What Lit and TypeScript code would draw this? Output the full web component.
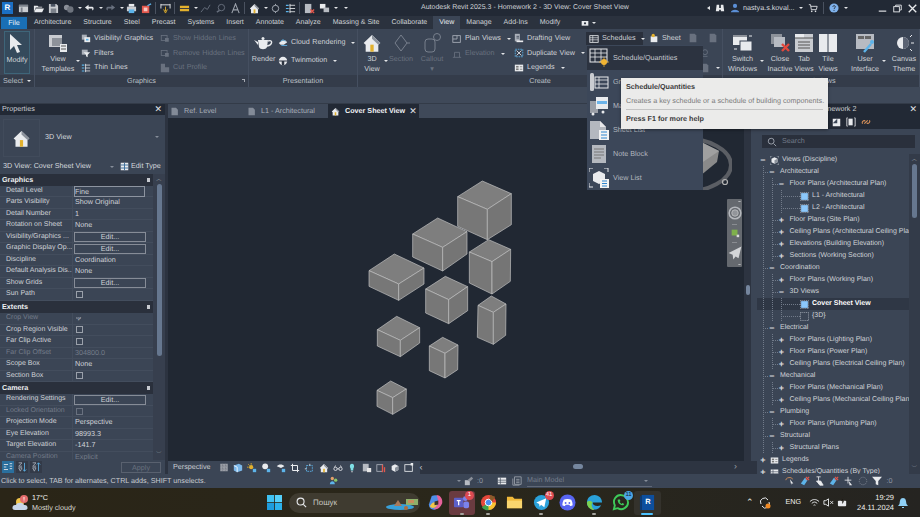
import { LitElement, css, html, svg } from 'lit'
import { customElement } from 'lit/decorators.js'
import { classMap } from 'lit/directives/class-map.js'

// small helper so every icon is a plain inline svg with its own box
const ico = (w: number, h: number, body: unknown, vb = '0 0 12 12') =>
  html`<svg class="ico" width=${w} height=${h} viewBox=${vb}>${body}</svg>`

const W = '#e9ebee'
const G = '#aab0ba'
const D = '#69717f'
const B = '#5db4ea'

const house = svg`<path d="M1 6 6 1.2 11 6 9.8 7V11.2H2.2V7Z" fill="${W}"/><path d="M6 1.2 11 6 9.8 7 6 3.4Z" fill="#8b929c"/><rect x="5" y="7" width="2" height="4.2" fill="#e3b12d"/>`
const cubeIco = svg`<path d="M2 3.6 6 1.6 10 3.6V8.4L6 10.4 2 8.4Z" fill="${W}"/><path d="M6 5.6 10 3.6V8.4L6 10.4Z" fill="#8b929c"/>`
const sheetIco = svg`<path d="M2 1H8L10.500 3.500V11H2Z" fill="#9a9ea6"/><path d="M8 1 10.500 3.500H8Z" fill="#dfe1e4"/>`
const dimIco = svg`<rect x="1.500" y="3" width="7" height="6" fill="none" stroke="${D}"/><rect x="6" y="6" width="4.500" height="4.500" fill="${D}"/>`
const listIco = svg`<rect x="1" y="2" width="10" height="8" fill="${W}"/><path d="M1 5H11M1 7.500H11M4 2V10" stroke="#3b4555" stroke-width=".8"/>`

const icons: Record<string, unknown> = {
  vg: svg`<rect x="1" y="2" width="6" height="6" fill="${G}"/><rect x="4" y="5" width="7" height="6" fill="${W}"/><rect x="6" y="7" width="3" height="2" fill="${B}"/>`,
  filter: svg`<rect x="1" y="2" width="7" height="6" fill="${G}"/><path d="M3 5H11L8 8V11L6 10V8Z" fill="${W}"/>`,
  thin: svg`<path d="M1 2.500H4M1 6H4M1 9.500H4" stroke="${B}" stroke-width="1.300"/><path d="M5 2.500H11M5 6H11M5 9.500H11M5.500 1V11" stroke="${W}" stroke-width=".9"/>`,
  dim: dimIco,
  cut: svg`<path d="M1 1H6V5H11V11H1Z" fill="${D}"/>`,
  cloud: svg`<path d="M1 6 5 3 9 3 11 5 7 8H3Z" fill="${W}"/><path d="M3 4 6 2 9 4" stroke="${B}" fill="none"/><path d="M4 9H11" stroke="${B}"/>`,
  twin: svg`<circle cx="6" cy="6" r="5" fill="${W}"/><path d="M1 5.500H11V6.500H7.500V11H4.500V6.500H1Z" fill="#2c3340"/>`,
  plan: svg`<rect x="1" y="2" width="9" height="8" fill="none" stroke="${G}"/><path d="M1 6H6V2" stroke="${G}" fill="none"/>`,
  elev: svg`<path d="M1 10H11M3 10V4H9V10" stroke="${D}" fill="none"/>`,
  draft: svg`<rect x="1" y="1" width="6" height="9" fill="${G}"/><path d="M3 9H11V11H3Z" fill="${W}"/><path d="M3 4H6M3 6H6" stroke="#3b4555"/>`,
  dup: svg`<rect x="1.500" y="1.500" width="9" height="9" fill="none" stroke="${B}" stroke-dasharray="2 1"/><path d="M3 3 9 9M9 3 3 9" stroke="${W}"/>`,
  legend: svg`<rect x="1" y="2" width="10" height="8" fill="${W}"/><rect x="2.500" y="3.500" width="3" height="2" fill="#777"/><rect x="2.500" y="6.500" width="3" height="2" fill="#777"/><path d="M7 4.500H10M7 7.500H10" stroke="#777"/>`,
  sched: svg`<rect x="1" y="2" width="10" height="8" fill="none" stroke="${W}"/><path d="M1 4.500H11M1 7H11M4.500 2V10" stroke="${W}" stroke-width=".8"/>`,
  sheet: svg`<path d="M2 4H10V11H2Z" fill="${W}"/><circle cx="5" cy="3" r="2" fill="#e3b12d"/>`,
  sheetd: sheetIco,
  dark: svg`<path d="M2 1H8L10 3V11H2Z" fill="${D}"/>`,
}

const CUBES: number[][] = [
  [397, 36, 484, 74, 412, 121, 323, 83, 412, 212, 323, 172, 484, 167],
  [263, 147, 351, 188, 278, 235, 188, 195, 278, 306, 188, 264, 351, 255],
  [416, 212, 482, 241, 426, 278, 358, 249, 426, 375, 358, 342, 481, 337],
  [133, 255, 222, 297, 146, 345, 57, 305, 146, 394, 57, 352, 222, 345],
  [286, 322, 353, 353, 296, 392, 227, 360, 296, 464, 227, 432, 353, 425],
  [424, 381, 468, 405, 430, 430, 384, 409, 430, 526, 382, 505, 467, 499],
  [140, 442, 209, 476, 151, 514, 82, 482, 151, 563, 82, 531, 209, 522],
  [278, 505, 324, 528, 285, 553, 238, 531, 285, 627, 238, 605, 323, 602],
  [122, 636, 169, 660, 128, 686, 81, 664, 128, 736, 81, 712, 168, 712],
]

type Prop = { n: string; v?: string; edit?: boolean; check?: boolean; on?: boolean; off?: boolean; box?: boolean }

const PROPS: { title: string; rows: Prop[] }[] = [
  {
    title: 'Graphics',
    rows: [
      { n: 'Detail Level', v: 'Fine', box: true },
      { n: 'Parts Visibility', v: 'Show Original' },
      { n: 'Detail Number', v: '1' },
      { n: 'Rotation on Sheet', v: 'None' },
      { n: 'Visibility/Graphics ...', edit: true },
      { n: 'Graphic Display Op...', edit: true },
      { n: 'Discipline', v: 'Coordination' },
      { n: 'Default Analysis Dis...', v: 'None' },
      { n: 'Show Grids', edit: true },
      { n: 'Sun Path', check: true },
    ],
  },
  {
    title: 'Extents',
    rows: [
      { n: 'Crop View', check: true, on: true, off: true },
      { n: 'Crop Region Visible', check: true },
      { n: 'Far Clip Active', check: true },
      { n: 'Far Clip Offset', v: '304800.0', off: true },
      { n: 'Scope Box', v: 'None' },
      { n: 'Section Box', check: true },
    ],
  },
  {
    title: 'Camera',
    rows: [
      { n: 'Rendering Settings', edit: true },
      { n: 'Locked Orientation', check: true, off: true },
      { n: 'Projection Mode', v: 'Perspective' },
      { n: 'Eye Elevation', v: '98993.3' },
      { n: 'Target Elevation', v: '-141.7' },
      { n: 'Camera Position', v: 'Explicit', off: true },
    ],
  },
]

type Node = { l: number; t: string; x?: string; i?: string; cur?: boolean }

const TREE: Node[] = [
  { l: 0, x: '−', t: 'Views (Discipline)', i: 'views' },
  { l: 1, x: '−', t: 'Architectural' },
  { l: 2, x: '−', t: 'Floor Plans (Architectural Plan)' },
  { l: 3, t: 'L1 - Architectural', i: 'open' },
  { l: 3, t: 'L2 - Architectural', i: 'open' },
  { l: 2, x: '+', t: 'Floor Plans (Site Plan)' },
  { l: 2, x: '+', t: 'Ceiling Plans (Architectural Ceiling Plan)' },
  { l: 2, x: '+', t: 'Elevations (Building Elevation)' },
  { l: 2, x: '+', t: 'Sections (Working Section)' },
  { l: 1, x: '−', t: 'Coordination' },
  { l: 2, x: '+', t: 'Floor Plans (Working Plan)' },
  { l: 2, x: '−', t: '3D Views' },
  { l: 3, t: 'Cover Sheet View', i: 'open', cur: true },
  { l: 3, t: '{3D}', i: 'closed' },
  { l: 1, x: '−', t: 'Electrical' },
  { l: 2, x: '+', t: 'Floor Plans (Lighting Plan)' },
  { l: 2, x: '+', t: 'Floor Plans (Power Plan)' },
  { l: 2, x: '+', t: 'Ceiling Plans (Electrical Ceiling Plan)' },
  { l: 1, x: '−', t: 'Mechanical' },
  { l: 2, x: '+', t: 'Floor Plans (Mechanical Plan)' },
  { l: 2, x: '+', t: 'Ceiling Plans (Mechanical Ceiling Plan)' },
  { l: 1, x: '−', t: 'Plumbing' },
  { l: 2, x: '+', t: 'Floor Plans (Plumbing Plan)' },
  { l: 1, x: '−', t: 'Structural' },
  { l: 2, x: '+', t: 'Structural Plans' },
  { l: 0, x: '+', t: 'Legends', i: 'legend' },
  { l: 0, x: '+', t: 'Schedules/Quantities (By Type)', i: 'sched' },
]

const TABS = ['Architecture', 'Structure', 'Steel', 'Precast', 'Systems', 'Insert', 'Annotate', 'Analyze', 'Massing & Site', 'Collaborate', 'View', 'Manage', 'Add-Ins', 'Modify']

const caret = html`<i class="caret"></i>`

@customElement('app-root')
export class AppRoot extends LitElement {
  private row(icon: string, text: string, opts: { off?: boolean; drop?: boolean } = {}) {
    return html`<div class="row ${opts.off ? 'off' : ''}">
      ${ico(10, 10, icons[icon])}<span>${text}</span>${opts.drop ? caret : ''}
    </div>`
  }

  private big(icon: unknown, lines: string[], cls = '', off = false) {
    return html`<div class="big ${cls} ${off ? 'off' : ''}">
      <div class="big-ico">${icon}</div>
      ${lines.map((l) => html`<div>${l}</div>`)}
    </div>`
  }

  private titleBar() {
    const q = (body: unknown, w = 11) => ico(w, 11, body)
    return html`<header class="title">
      <div class="logo">R</div>
      <div class="qat">
        ${q(svg`<path d="M1 2H11V10H1Z" fill="#c9ccd1"/><path d="M1 2H11V4H1ZM3 5H5V10H3Z" fill="#7b818b"/>`)}
        ${q(svg`<path d="M1 3H5L6 4H10V5H3L1 10ZM3 6H12L10 10H1.500Z" fill="${W}"/>`)}
        ${q(svg`<path d="M1 1H9L11 3V11H1Z" fill="#c9ccd1"/><rect x="3" y="1" width="5" height="3" fill="#4a5362"/><rect x="3" y="6" width="6" height="5" fill="#7b818b"/>`)}
        ${q(svg`<circle cx="4" cy="5" r="3" fill="#8a8f99"/><circle cx="8" cy="7" r="3.500" fill="#6d737d"/>`)}
        ${caret}
        ${q(svg`<path d="M1 5 5 2V4H9C11 4 11 8 9 8V6H5V8Z" fill="${W}"/>`)}${caret}
        ${q(svg`<path d="M11 5 7 2V4H3C1 4 1 8 3 8V6H7V8Z" fill="${D}"/>`)}${caret}
        ${q(svg`<rect x="3" y="1" width="6" height="3" fill="${W}"/><rect x="1" y="4" width="10" height="5" fill="#c9ccd1"/><rect x="3" y="7" width="6" height="4" fill="${B}"/>`)}
        ${q(svg`<rect x="1" y="3" width="8" height="8" fill="#e2574c"/><rect x="3" y="5" width="4" height="4" fill="#f6c6c1"/><path d="M7 3 11 1" stroke="${B}" stroke-width="1.500"/>`)}
        <b class="sep"></b>
        ${q(svg`<path d="M1 1V6M11 1V6M1 2H11" stroke="${W}" fill="none"/><path d="M6 4V9M4 7 6 11 8 7" stroke="#e3b12d" fill="none"/>`)}
        <b class="sep"></b>
        ${q(svg`<rect x="1" y="3" width="10" height="6" fill="#e3b12d"/><path d="M1 6H11" stroke="#2c3340"/>`)}${caret}
        ${q(svg`<path d="M1 10 5 5 8 7 11 2" stroke="${D}" fill="none"/>`)}
        ${q(svg`<circle cx="7" cy="5" r="3.500" stroke="${D}" fill="none"/><path d="M5 8 2 10" stroke="${D}" stroke-width="1.500"/>`)}
        ${q(svg`<path d="M2 11 6 1 10 11M3.500 7.500H8.500" stroke="#9ca2ac" stroke-width="1.200" fill="none"/>`)}
        <b class="sep"></b>
        ${q(house)}${caret}
        ${q(svg`<circle cx="6" cy="6" r="3.500" fill="none" stroke="${G}"/><path d="M6 1V2.500M6 9.500V11" stroke="${G}"/>`)}
        ${q(icons.thin)}
        <b class="sep"></b>
        ${q(svg`<rect x="1" y="1" width="7" height="10" fill="#b7bbc2"/><path d="M7 7 11 11M11 7 7 11" stroke="#e2574c" stroke-width="1.500"/>`)}
        ${q(svg`<rect x="1" y="1" width="6" height="5" fill="${W}"/><rect x="5" y="5" width="6" height="5" fill="#b7bbc2"/>`)}${caret}
        <i class="caret bar"></i>
      </div>
      <div class="doc">Autodesk Revit 2025.3 - Homework 2 - 3D View: Cover Sheet View</div>
      <div class="tools">
        <i class="tri"></i>
        ${ico(10, 10, svg`<path d="M2 2H5V6H7V2H10L11 10H7V8H5V10H1Z" fill="${W}"/>`)}
        ${ico(10, 10, svg`<circle cx="6" cy="3.500" r="2.500" fill="#5b8fd6"/><path d="M1 11C1 7 11 7 11 11Z" fill="#5b8fd6"/>`)}
        <span class="user">nastya.s.koval...</span>${caret}
        ${ico(10, 10, svg`<path d="M1 2H3L4 8H10L11 4H3.500" fill="none" stroke="${W}"/><circle cx="4.500" cy="10" r="1" fill="${W}"/><circle cx="9" cy="10" r="1" fill="${W}"/>`)}
        <b class="sep"></b>
        ${ico(10, 10, svg`<circle cx="6" cy="6" r="5.500" fill="#7fb2ec"/><path d="M4.500 4.500C4.500 2.800 7.700 2.800 7.700 4.500 7.700 5.800 6 5.800 6 7.200M6 8.300V9.500" stroke="#1f2530" fill="none"/>`)}${caret}
      </div>
      <div class="win">
        ${ico(9, 9, svg`<path d="M1 9.500H11" stroke="${W}" stroke-width="1.500"/>`)}
        ${ico(9, 9, svg`<rect x="1" y="3.500" width="7.500" height="7" fill="none" stroke="${W}" stroke-width="1.200"/><path d="M3.500 3V1.500H11V8H9" fill="none" stroke="${W}" stroke-width="1.200"/>`)}
        ${ico(9, 9, svg`<path d="M1 1 11 11M11 1 1 11" stroke="${W}" stroke-width="1.800"/>`)}
      </div>
    </header>`
  }

  private tabBar() {
    return html`<nav class="tabs">
      <div class="file">File</div>
      ${TABS.map((t) => html`<div class="tab ${t === 'View' ? 'on' : ''}">${t}</div>`)}
      <div class="tab-extra">
        ${ico(10, 8, svg`<rect x="1" y="3" width="10" height="7" fill="${W}"/><circle cx="6" cy="6.500" r="1.600" fill="#2c3340"/>`)}${caret}
      </div>
    </nav>`
  }

  private ribbon() {
    return html`<section class="ribbon">
      <div class="panel p-select">
        <div class="body">
          ${this.big(ico(20, 20, svg`<path d="M3 0V16L7 12 10 19 13 18 10 11H15Z" fill="${W}"/>`, '0 0 20 20'), ['Modify'], 'modify')}
        </div>
        <div class="lab">Select ${caret}</div>
      </div>

      <div class="panel p-graphics">
        <div class="body">
          ${this.big(ico(20, 20, svg`<rect x="1" y="2" width="13" height="12" fill="#c9ccd1"/><rect x="4" y="5" width="10" height="8" fill="#8d929a"/><path d="M12 11H19V19H12Z" fill="${W}"/><path d="M13 13H18M13 16H18" stroke="#555"/>`, '0 0 20 20'), ['View', 'Templates'], 'w34')}
          <i class="caret side"></i>
          <div class="stack w79">
            ${this.row('vg', 'Visibility/ Graphics')}${this.row('filter', 'Filters')}${this.row('thin', 'Thin Lines')}
          </div>
          <div class="stack">
            ${this.row('dim', 'Show Hidden Lines', { off: true })}${this.row('dim', 'Remove Hidden Lines', { off: true })}${this.row('cut', 'Cut Profile', { off: true })}
          </div>
        </div>
        <div class="lab">Graphics<i class="launch"></i></div>
      </div>

      <div class="panel p-present">
        <div class="body">
          ${this.big(ico(20, 14, svg`<path d="M4 4H14L13 11C12 14 6 14 5 11Z" fill="${W}"/><path d="M14 5C19 3 19 9 13 10" fill="none" stroke="${W}" stroke-width="1.400"/><path d="M0 4 4 6V9Z" fill="${W}"/><circle cx="9" cy="2.500" r="1.500" fill="${W}"/>`, '0 0 20 14'), ['Render'], 'w25')}
          <div class="stack two">
            ${this.row('cloud', 'Cloud Rendering', { drop: true })}${this.row('twin', 'Twinmotion', { drop: true })}
          </div>
        </div>
        <div class="lab">Presentation</div>
      </div>

      <div class="panel p-create">
        <div class="body">
          ${this.big(ico(20, 20, house, '0 0 12 12'), ['3D', 'View'], 'w22')}
          <i class="caret side"></i>
          ${this.big(ico(20, 20, svg`<path d="M10 2 16 10 10 18 4 10Z" fill="none" stroke="#78808d"/><path d="M16 10H19" stroke="#78808d"/>`, '0 0 20 20'), ['Section'], 'w24', true)}
          ${this.big(ico(20, 20, svg`<rect x="3" y="6" width="10" height="13" rx="3" fill="none" stroke="#78808d"/><circle cx="15" cy="4" r="3.500" fill="none" stroke="#78808d"/>`, '0 0 20 20'), ['Callout', '▾'], 'w24 callout', true)}
          <div class="stack w62">
            ${this.row('plan', 'Plan Views', { drop: true })}${this.row('elev', 'Elevation', { off: true, drop: true })}
          </div>
          <div class="stack w72">
            ${this.row('draft', 'Drafting View')}${this.row('dup', 'Duplicate View', { drop: true })}${this.row('legend', 'Legends', { drop: true })}
          </div>
          <div class="stack w63">
            <div class="row sched-btn">${ico(10, 10, icons.sched)}<span>Schedules</span>${caret}</div>
          </div>
          <div class="stack">
            <div class="row sheet-row">
              ${ico(10, 10, icons.sheet)}<span>Sheet</span>${ico(10, 10, icons.dark)}${ico(10, 10, icons.dark)}
            </div>
            <div class="row end">${ico(10, 10, svg`<circle cx="6" cy="5" r="3" fill="none" stroke="${D}"/><path d="M3 10H9" stroke="${D}"/>`)}</div>
            <div class="row end">${ico(10, 10, icons.dark)}${caret}</div>
          </div>
        </div>
        <div class="lab">Create</div>
      </div>

      <div class="panel p-win">
        <div class="body">
          ${this.big(ico(20, 20, svg`<rect x="0" y="2" width="14" height="10" fill="${W}"/><rect x="0" y="2" width="14" height="2" fill="#8d929a"/><rect x="7" y="8" width="12" height="10" fill="${W}" stroke="#3b4555"/><path d="M16 3H19M1 16H4" stroke="${W}"/>`, '0 0 20 20'), ['Switch', 'Windows'], 'w25')}
          <i class="caret side wide"></i>
          ${this.big(ico(20, 20, svg`<rect x="1" y="1" width="11" height="10" fill="#8d929a"/><rect x="4" y="4" width="11" height="10" fill="#b7bbc2"/><path d="M12 11 19 18M19 11 12 18" stroke="#e2483c" stroke-width="2.400"/>`, '0 0 20 20'), ['Close', 'Inactive'], 'w24')}
          ${this.big(ico(20, 20, svg`<rect x="1" y="1" width="18" height="18" fill="#c9ccd1"/><rect x="1" y="1" width="9" height="4" fill="${W}"/><path d="M1 5H19M4 9H16M4 12H16M4 15H16" stroke="#555"/>`, '0 0 20 20'), ['Tab', 'Views'], 'w24')}
          ${this.big(ico(20, 20, svg`<rect x="1" y="1" width="8.500" height="18" fill="${W}"/><rect x="10.500" y="1" width="8.500" height="18" fill="${W}"/>`, '0 0 20 20'), ['Tile', 'Views'], 'w24')}
          <b class="divider"></b>
          ${this.big(ico(20, 20, svg`<rect x="1" y="1" width="18" height="15" fill="#b7bbc2"/><rect x="3" y="3" width="6" height="3" fill="#666"/><rect x="10" y="3" width="6" height="3" fill="#666"/><path d="M9 19 16 11" stroke="#5db4ea" stroke-width="2.400"/><circle cx="17" cy="9" r="2" fill="#5db4ea"/>`, '0 0 20 20'), ['User', 'Interface'], 'w36')}
          <i class="caret side narrow"></i>
          ${this.big(ico(20, 20, svg`<circle cx="9" cy="10" r="6" fill="${W}"/><path d="M9 4A6 6 0 0 1 9 16Z" fill="#5b6373"/><path d="M16 4 18 2M17 10H20M16 16 18 18" stroke="${W}"/>`, '0 0 20 20'), ['Canvas', 'Theme'], 'w32')}
        </div>
        <div class="lab">Windows</div>
      </div>
    </section>`
  }

  private properties() {
    return html`<aside class="props">
      <div class="dock"><span>Properties</span><span class="x">✕</span></div>
      <div class="type">
        <div class="type-ico">${ico(19, 19, house)}</div>
        <span>3D View</span>
        <i class="caret dimc"></i>
      </div>
      <div class="type-row">
        <span class="sel">3D View: Cover Sheet View<i class="caret dimc"></i></span>
        ${ico(9, 9, svg`<rect x="1" y="1" width="10" height="10" fill="${W}"/><path d="M1 4H11M1 8H11M6 1V11" stroke="#3f6f9c" stroke-width="1.300"/>`)}
        <span>Edit Type</span>
      </div>
      <div class="sheet-wrap">
        <div class="sheet">
          ${PROPS.map(
            (g) => html`<div class="grp"><span>${g.title}</span><i class="pin"></i></div>
              ${g.rows.map((r) => this.prop(r))}`,
          )}
        </div>
        <div class="vscroll">
          <span class="up">︿</span>
          <i class="thumb"></i>
          <span class="down">﹀</span>
        </div>
      </div>
      <div class="prop-foot">
        <div class="pick on">${ico(10, 10, svg`<path d="M1 3H6M1 6H4M1 9H6" stroke="${W}"/><path d="M8 2H11M8 5H11M8 8H11" stroke="${W}"/>`)}</div>
        <div class="pick">${ico(10, 10, svg`<path d="M2 1H6L2 5H6M2 7H6L4 11Z" stroke="${G}" fill="none"/><path d="M9 1V11M7 9 9 11 11 9" stroke="${B}" fill="none"/>`)}</div>
        <div class="pick">${ico(10, 10, svg`<path d="M2 1H6L2 5H6M2 7H6L4 11Z" stroke="${G}" fill="none"/><path d="M9 11V1M7 3 9 1 11 3" stroke="${B}" fill="none"/>`)}</div>
        <div class="apply">Apply</div>
      </div>
    </aside>`
  }

  private prop(r: Prop) {
    return html`<div class="prow ${r.off ? 'off' : ''}">
      <div class="pn">${r.n}</div>
      <div class="pv">
        ${r.edit ? html`<div class="edit">Edit...</div>` : ''}
        ${r.check ? html`<i class="chk ${r.on ? 'tick' : ''}"></i>` : ''}
        ${r.v ? html`<span class="val ${r.box ? 'boxed' : ''}">${r.v}</span>` : ''}
      </div>
    </div>`
  }

  private center() {
    const tabIco = ico(9, 9, svg`<path d="M2 1H8L10.500 3.500V11H2Z" fill="#838b98"/>`)
    return html`<main class="center">
      <div class="doc-tabs">
        <div class="dt">${tabIco}<span>Ref. Level</span></div>
        <div class="dt">${tabIco}<span>L1 - Architectural</span></div>
        <div class="dt cur">${ico(9, 9, house)}<span>Cover Sheet View</span><span class="x">✕</span></div>
      </div>
      <div class="view-row">
        <div class="canvas">
          <svg class="cubes" width="190" height="250" viewBox="0 0 570 750">
            ${CUBES.map((c) => {
              const [tx, ty, rx, ry, cx, cy, lx, ly, bx, by, lbx, lby, rbx, rby] = c
              return svg`<g stroke="#c4c4c4" stroke-width="2" stroke-linejoin="round">
                <polygon fill="#7e7e7e" points="${tx},${ty} ${rx},${ry} ${cx},${cy} ${lx},${ly}"/>
                <polygon fill="#777" points="${lx},${ly} ${cx},${cy} ${bx},${by} ${lbx},${lby}"/>
                <polygon fill="#757575" points="${cx},${cy} ${rx},${ry} ${rbx},${rby} ${bx},${by}"/>
              </g>`
            })}
          </svg>
          <svg class="viewcube" width="90" height="70" viewBox="0 0 90 70">
            <ellipse cx="40" cy="45" rx="49" ry="27" fill="none" stroke="#5b5e64" stroke-width="4"/>
            <path d="M20 20 61 23 77 31 75 42 58 56 20 50Z" fill="#8a8a8a"/>
            <path d="M61 23 77 31 58 44 30 30Z" fill="#a0a0a0"/>
            <circle cx="83" cy="62" r="2.500" fill="none" stroke="#b5b5b5" stroke-width="1.200"/>
          </svg>
          <div class="navbar">
            <i class="nav-dot"></i>
            ${ico(14, 14, svg`<circle cx="6" cy="6" r="5" fill="none" stroke="#b5b8bd" stroke-width="1.300"/><circle cx="6" cy="6" r="2.800" fill="#92959a" stroke="#c8cacd" stroke-width=".6"/>`)}
            <i class="nav-caret"></i>
            ${ico(10, 10, svg`<rect x="2" y="2" width="7" height="7" fill="#7fb04c"/><rect x="8" y="8" width="3" height="3" fill="#ddd"/>`)}
            <i class="nav-caret"></i>
            ${ico(14, 14, svg`<path d="M11.500 .5 .5 6 4 7.500 4.500 11.500 6.500 9 9 10.500Z" fill="#d3d5d8"/>`)}
            <i class="nav-dot"></i>
          </div>
        </div>
        <div class="view-scroll"><i class="thumb mini"></i></div>
        <div class="gutter"></div>
      </div>
      <div class="view-bottom">
        <div class="vcb">
          <span>Perspective</span>
          <div class="vcb-icons">
            ${ico(10, 9, svg`<rect x="1" y="1" width="10" height="10" fill="#9a9ea6"/><path d="M1 4H11M1 8H11M4 1V11M8 1V11" stroke="#6d737d" stroke-dasharray="1 1"/>`)}
            ${ico(10, 10, svg`<path d="M1 3 7 1 11 3V9L5 11 1 9Z" fill="#7cb8ea"/><path d="M1 3 5 5V11" stroke="#fff" fill="none"/>`)}
            ${ico(10, 10, svg`<circle cx="5" cy="5" r="2.500" fill="#e3b12d"/><path d="M5 0V2M0 5H2M1.500 1.500 3 3" stroke="#e3b12d"/><rect x="7" y="7" width="4" height="4" fill="${B}"/>`)}
            ${ico(10, 10, svg`<circle cx="5" cy="4" r="3.500" fill="${W}"/><rect x="7" y="7" width="4" height="4" fill="${B}"/>`)}
            ${ico(10, 10, svg`<path d="M1 4C3 1 8 1 10 4L6 6Z" fill="${W}"/><rect x="7" y="7" width="4" height="4" fill="${B}"/>`)}
            ${ico(10, 10, svg`<path d="M3 1V9H11M1 3H9V11" stroke="${W}" fill="none" stroke-width="1.200"/>`)}
            ${ico(10, 10, svg`<rect x="3" y="3" width="7" height="7" fill="none" stroke="${B}" stroke-dasharray="2 1"/><path d="M1 7H3M7 1V3" stroke="${W}"/>`)}
            ${ico(10, 10, house)}
            ${ico(10, 10, svg`<circle cx="3" cy="7" r="2" fill="none" stroke="${W}"/><circle cx="9" cy="7" r="2" fill="none" stroke="${W}"/><path d="M5 7H7M2 5 3 3M10 5 9 3" stroke="${W}"/>`)}
            ${ico(10, 10, svg`<path d="M6 1C9 1 9 5 7.500 7V9H4.500V7C3 5 3 1 6 1Z" fill="#7fe0e6"/><path d="M5 10.500H7" stroke="${W}"/>`)}
            ${ico(10, 10, svg`<rect x="1" y="1" width="7" height="9" fill="#b7bbc2"/><rect x="6" y="6" width="5" height="5" fill="#e6e6e6"/>`)}
            ${ico(10, 10, svg`<rect x="1" y="2" width="7" height="8" fill="none" stroke="${G}"/><rect x="7" y="2" width="1.500" height="9" fill="#e2574c"/><rect x="9.500" y="5" width="1.500" height="6" fill="#e2574c"/>`)}
            ${ico(10, 10, cubeIco)}
            ${ico(10, 10, svg`<rect x="1" y="2" width="9" height="8" fill="none" stroke="${W}"/><rect x="8" y="0" width="3" height="3" fill="${W}"/>`)}
          </div>
          <span class="less">‹</span>
        </div>
        <div class="hscroll"><i class="hthumb"></i><span class="more">›</span></div>
      </div>
    </main>`
  }

  private browser() {
    return html`<aside class="browser">
      <div class="dock"><span>Project Browser - Homework 2</span><span class="x">✕</span></div>
      <div class="br-tools">
        ${ico(9, 9, svg`<path d="M1 1H11V11H1Z" fill="${W}"/><path d="M1 7H7V1" fill="#3b4555"/>`)}
        ${ico(10, 10, svg`<path d="M2 1H1V11H2M10 1H11V11H10" stroke="${W}" fill="none"/><path d="M3 2H8V10H3Z" fill="${W}"/>`)}
        ${ico(10, 10, svg`<path d="M2 8C0 6 4 3 5 5M10 4C12 6 8 9 7 7M4 8 8 4" stroke="#d9925a" stroke-width="1.300" fill="none"/>`)}
      </div>
      <div class="search">
        ${ico(10, 10, svg`<circle cx="5" cy="5" r="3.500" fill="none" stroke="${G}"/><path d="M8 8 11 11" stroke="${G}"/>`)}
        <span>Search</span>
      </div>
      <div class="tree-wrap">
        <div class="tree">
          ${TREE.map((n) => this.treeRow(n))}
        </div>
        <div class="vscroll tree-scroll">
          <span class="up">︿</span>
          <i class="thumb"></i>
          <span class="down">﹀</span>
        </div>
      </div>
    </aside>`
  }

  private treeRow(n: Node) {
    const pad = n.l === 0 ? 2 : n.l === 3 ? 24 : 6 + (n.l - 1) * 9.5
    const rowIco: Record<string, unknown> = {
      views: svg`<path d="M0 3V0H3M9 0H12V3M12 9V12H9M3 12H0V9" stroke="${G}" fill="none"/>${cubeIco}`,
      open: svg`<rect x=".5" y=".5" width="11" height="11" fill="none" stroke="#aeb4bd" stroke-dasharray="1.500 1"/><rect x="1.500" y="1.500" width="9" height="9" fill="#8cc8fb"/>`,
      closed: svg`<rect x=".5" y=".5" width="11" height="11" fill="none" stroke="#aeb4bd" stroke-dasharray="1.500 1"/>`,
      legend: icons.legend,
      sched: listIco,
    }
    return html`<div
      class=${classMap({ node: true, ['g' + n.l]: true, cur: !!n.cur })}
      style="padding-left:${pad}px"
    >
      ${n.l ? html`<i class=${classMap({ tick: true, long: n.l === 3 })}></i>` : ''}
      ${n.x ? html`<b class="exp">${n.x}</b>` : ''}
      ${n.i ? html`<span class="node-ico">${ico(9, 9, rowIco[n.i])}</span>` : ''}
      <span>${n.t}</span>
    </div>`
  }

  private statusBar() {
    return html`<footer class="status">
      <span class="hint">Click to select, TAB for alternates, CTRL adds, SHIFT unselects.</span>
      <span class="worksets">
        ${ico(10, 10, svg`<circle cx="4" cy="3" r="2" fill="#e3a06a"/><path d="M1 10C1 5 7 5 7 10Z" fill="#5db4ea"/><circle cx="8" cy="5" r="2" fill="#8cc76a"/>`)}
      </span>
      <span class="stat-mid">
        <i class="caret dimc"></i>
        ${ico(10, 10, svg`<rect x="1" y="5" width="6" height="6" fill="#b7bbc2"/><path d="M4 5 9 1 11 3 7 7Z" fill="#8a8f99"/>`)}<span class="dim">:0</span>
      </span>
      <span class="stat-icons">
        ${ico(10, 10, listIco)}
        ${ico(10, 10, svg`<path d="M3 1H11V10H3ZM1 3V11H9" fill="none" stroke="#9ca2ac"/><path d="M5 4H9M5 6H9M5 8H9" stroke="#9ca2ac"/>`)}
      </span>
      <span class="model">Main Model<i class="caret dimc"></i></span>
      <span class="sel-ico">
        ${ico(10, 10, svg`<path d="M1 5C1 1 9 1 9 4" stroke="#d9925a" fill="none"/><path d="M6 4 10 9 7.500 9 7.500 11Z" fill="${W}"/>`)}
        ${ico(10, 10, svg`<path d="M1 9 6 2 9 5 5 11Z" fill="${B}"/><path d="M7 1 11 5M11 1 7 5" stroke="#e2574c" stroke-width="1.300"/>`)}
        ${ico(10, 10, svg`<path d="M3 1H8M5.500 1V6M3 6H8L11 11H7Z" fill="${W}" stroke="${W}"/>`)}
        ${ico(10, 10, svg`<path d="M1 9 6 2 9 5 5 11Z" fill="${B}"/><path d="M7 1 11 5M11 1 7 5" stroke="#e2574c" stroke-width="1.300"/>`)}
        ${ico(10, 10, svg`<path d="M6 1V9M2 5H10" stroke="${W}"/><path d="M7 6 11 11H8V12Z" fill="${W}"/>`)}
        ${ico(10, 10, svg`<circle cx="6" cy="6" r="4.500" fill="none" stroke="#7d8490" stroke-dasharray="1.500 1"/>`)}
        ${ico(10, 10, svg`<path d="M0 1H12L7.500 6V11L4.500 10V6Z" fill="${W}"/>`)}
        <span class="dim">:0</span>
      </span>
    </footer>`
  }

  private taskbar() {
    const app = (cls: string, body: unknown, badge = '') => html`<div class="app ${cls}">
      ${ico(17, 17, body, '0 0 18 18')}
      ${badge ? html`<b class="badge ${cls}">${badge}</b>` : ''}
    </div>`
    return html`<footer class="taskbar">
      <div class="weather">
        ${ico(16, 16, svg`<circle cx="8" cy="7" r="4" fill="#f1c54a"/><path d="M3 15C-1 15 0 9 4 10 5 7 11 7 12 10 16 9 17 15 13 15Z" fill="#c8d6e8"/><circle cx="12" cy="4" r="4" fill="#e46d6d"/><path d="M12 2V4.800M12 5.500V6.300" stroke="#fff" stroke-width=".9"/>`, '0 0 16 16')}
        <div><div>17°C</div><div class="sub">Mostly cloudy</div></div>
      </div>
      <div class="middle">
        ${ico(15, 15, svg`<rect x="0" y="0" width="7.200" height="7.200" fill="#3fc2f2"/><rect x="8" y="0" width="7.200" height="7.200" fill="#55d0fa"/><rect x="0" y="8" width="7.200" height="7.200" fill="#1e9cdc"/><rect x="8" y="8" width="7.200" height="7.200" fill="#2bb2ec"/>`, '0 0 15 15')}
        <div class="pill">
          ${ico(11, 11, svg`<circle cx="5" cy="5" r="3.800" fill="none" stroke="${W}" stroke-width="1.200"/><path d="M8 8 11 11" stroke="${W}" stroke-width="1.300"/>`)}
          <span>Пошук</span>
          ${ico(33, 14, svg`<ellipse cx="14" cy="11" rx="14" ry="3" fill="#3aa0d8"/><path d="M8 10 12 4 16 10Z" fill="#a9795a"/><path d="M20 9V3H32V9Z" fill="#8fb06a"/><rect x="22" y="4" width="6" height="3" fill="#c98d5e"/><circle cx="20" cy="12" r="2" fill="#b06a3a"/>`, '0 0 33 14')}
        </div>
        ${app('', svg`<path d="M5 2C10 0 13 2 14 6L10 16C6 18 2 15 2 11Z" fill="#4f8ee8"/><path d="M10 1C14 1 17 5 16 10 14 15 10 17 7 16 12 13 13 8 10 1Z" fill="#e8629b"/><path d="M3 13C6 7 9 8 11 11 9 15 5 16 3 13Z" fill="#f1c54a"/><path d="M8 8 12 7 12 11 8 12Z" fill="#3b342a"/>`)}
        ${app('teams run', svg`<rect x="1" y="4" width="10" height="10" rx="1" fill="#5b5fc7"/><path d="M4 7H8M6 7V12" stroke="#fff" stroke-width="1.300"/><circle cx="13" cy="5" r="2.500" fill="#7b83eb"/><rect x="11" y="8" width="6" height="7" rx="2" fill="#7b83eb"/>`, '1')}
        ${app('run', svg`<circle cx="9" cy="9" r="8" fill="#e5483b"/><path d="M9 9 2 14A8 8 0 0 0 12 16.500Z" fill="#3fa34d"/><path d="M9 9H17A8 8 0 0 1 9 17Z" fill="#f7c331"/><circle cx="9" cy="9" r="3.500" fill="#4b8ff0" stroke="#fff"/><path d="M11 1 16 3 13 8 10 5Z" fill="#8a5a2a"/>`)}
        ${app('', svg`<path d="M1 3H7L9 5H17V15H1Z" fill="#f0b93a"/><rect x="1" y="7" width="16" height="8" fill="#f9d56e"/>`)}
        ${app('tele run', svg`<circle cx="9" cy="9" r="8" fill="#2aa1da"/><path d="M3.500 9 14 4.500 12 14 8.500 11.500 7 13.500 6.500 10.500Z" fill="#fff"/>`, '41')}
        ${app('', svg`<circle cx="9" cy="9" r="8.500" fill="#5865f2"/><path d="M5 6C7 5 11 5 13 6 14 8 14.500 10 14.500 12 13 13 12 13 11.500 12.500L11 11.500H7L6.500 12.500C6 13 5 13 3.500 12 3.500 10 4 8 5 6Z" fill="#fff"/><circle cx="7" cy="9.500" r="1" fill="#5865f2"/><circle cx="11" cy="9.500" r="1" fill="#5865f2"/>`)}
        ${app('run', svg`<path d="M1 9C1 4 5 1 9 1 14 1 17 5 17 9H7C7 12 11 14 16 12 14 17 7 18 3 14 1 12 1 10 1 9Z" fill="#2aa0d8"/><path d="M1 9C1 13 4 17 9 17 6 15 5 11 7 9 5 7 2 7 1 9Z" fill="#7cd14f"/>`)}
        ${app('wa', svg`<path d="M2 16 3 12C0 6 5 1 9 1 14 1 17 5 17 9 17 14 11 18 6 15Z" fill="none" stroke="#3ecb5a" stroke-width="2"/><path d="M6 6C6 10 9 12 12 12L13 10.500 11 9.500 10 10.500 8 8.500 9 7.500 8 5.500Z" fill="#3ecb5a"/>`, '11')}
        ${app('revit', svg`<rect x="3" y="1" width="13" height="16" fill="#0d4f9e"/><path d="M3 1 1 3V17H3Z" fill="#0a3b78"/><text x="9.500" y="10.500" text-anchor="middle" font-size="8" font-weight="700" fill="#fff" font-family="Liberation Sans">R</text>`)}
      </div>
      <div class="tray">
        <span class="chev">⌃</span>
        ${ico(12, 12, svg`<path d="M2 7A4 4 0 0 1 9 3M10 5A4 4 0 0 1 3 9" stroke="${W}" fill="none"/><circle cx="9" cy="9" r="2.500" fill="#f08a24"/>`)}
        <span class="eng">ENG</span>
        ${ico(11, 11, svg`<path d="M1 5C4 2 8 2 11 5M3 7C5 5 7 5 9 7M5 9C5.500 8.500 6.500 8.500 7 9" stroke="${W}" fill="none"/>`)}
        ${ico(11, 11, svg`<path d="M1 4H3L6 2V10L3 8H1Z" fill="none" stroke="${W}"/><path d="M8 4.500 11 7.500M11 4.500 8 7.500" stroke="${W}"/>`)}
        ${ico(11, 11, svg`<rect x="1" y="4" width="9" height="6" rx="1" fill="${W}"/><path d="M6 1 5 4H7L6 7" stroke="#2a2620"/>`)}
        <div class="clock"><div>19:29</div><div>24.11.2024</div></div>
        ${ico(12, 12, svg`<path d="M6 1C9 1 9 4 9.500 7L11 9H1L2.500 7C3 4 3 1 6 1Z" fill="#8fd0f5"/><path d="M5 10.500H7" stroke="#8fd0f5"/>`)}
      </div>
    </footer>`
  }

  private overlays() {
    const items: [string, unknown][] = [
      ['Schedule/Quantities', svg`<rect x="1" y="1" width="17" height="13" fill="none" stroke="${W}"/><path d="M1 5H18M1 9H18M6 1V14M12 1V14" stroke="${W}" stroke-width=".8"/><circle cx="15" cy="14" r="3" fill="#f2b634"/><path d="M15 9V19M10 14H20" stroke="#f2b634" stroke-width=".7"/>`],
      ['Graphical Column Schedule', svg`<rect x="1" y="1" width="4" height="18" rx="1.500" fill="#c9ccd1"/><rect x="6" y="5" width="13" height="11" fill="none" stroke="${W}"/><path d="M6 8H19M6 12H19M10 5V16" stroke="${W}" stroke-width=".8"/>`],
      ['Material Takeoff', svg`<rect x="1" y="5" width="8" height="12" fill="#9a9ea6"/><rect x="7" y="1" width="12" height="12" fill="${W}"/><rect x="8" y="5" width="10" height="3" fill="#6cb4ea"/><circle cx="4" cy="18" r="1.500" fill="${W}"/><circle cx="14" cy="16" r="1.500" fill="${W}"/>`],
      ['Sheet List', svg`<path d="M1 1H11L17 7V19H1Z" fill="#b4b8bf"/><path d="M11 1 17 7H11Z" fill="#e7e8ea"/><rect x="10" y="10" width="10" height="10" fill="#f4f4f4"/><path d="M12 12H18M12 15H18M12 18H18" stroke="#2e86d0"/>`],
      ['Note Block', svg`<rect x="3" y="1" width="14" height="18" fill="#b4b8bf"/><path d="M5 5H15M5 8H15M5 11H15M5 14H12" stroke="#777"/>`],
      ['View List', svg`<path d="M0 4V0H4M15 0H19V4M0 15V19H4" stroke="${W}" fill="none"/><path d="M4 6 10 3 16 6V13L10 16 4 13Z" fill="${W}"/><rect x="11" y="11" width="9" height="9" fill="#f4f4f4"/><path d="M13 13H18M13 15.500H18M13 18H18" stroke="#2e86d0"/>`],
    ]
    return html`
      <div class="menu">
        ${items.map(
          ([t, i], idx) => html`<div class="mi ${idx === 0 ? 'hot' : ''}">
            ${ico(20, 20, i, '0 0 20 20')}<span>${t}</span>
          </div>`,
        )}
      </div>
      <div class="tip">
        <div class="tip-t">Schedule/Quantities</div>
        <div class="tip-d">Creates a key schedule or a schedule of building components.</div>
        <div class="tip-h">Press F1 for more help</div>
      </div>
    `
  }

  render() {
    return html`
      ${this.titleBar()}${this.tabBar()}${this.ribbon()}
      <div class="strip"></div>
      <div class="work">${this.properties()}${this.center()}${this.browser()}</div>
      ${this.statusBar()}${this.taskbar()}${this.overlays()}
    `
  }

  static styles = css`
    :host {
      display: block;
      position: relative;
      width: 920px;
      height: 517px;
      overflow: hidden;
      background: #3b4555;
      color: #d5d8dd;
      font: 7.2px/1.2 'Liberation Sans', Arial, sans-serif;
      text-rendering: geometricPrecision;
    }
    * {
      box-sizing: border-box;
    }
    i {
      display: inline-block;
      font-style: normal;
    }
    .ico {
      flex: none;
      display: block;
    }
    .caret {
      width: 0;
      height: 0;
      flex: none;
      border-left: 2px solid transparent;
      border-right: 2px solid transparent;
      border-top: 2px solid #e3e5e8;
    }
    .dimc {
      border-top-color: #868d99;
    }
    .sep {
      width: 1px;
      height: 12px;
      background: #4a5260;
      flex: none;
    }

    /* title bar */
    .title {
      height: 16px;
      background: #222935;
      display: flex;
      align-items: center;
      position: relative;
      padding-left: 2px;
    }
    .logo {
      width: 11px;
      height: 12px;
      background: #1b6fc4;
      color: #fff;
      font-weight: 700;
      font-size: 8px;
      text-align: center;
      line-height: 12px;
      flex: none;
    }
    .qat {
      display: flex;
      align-items: center;
      gap: 4px;
      margin-left: 5px;
      width: 403px;
      flex: none;
    }
    .qat .caret {
      margin-right: -2px;
    }
    .qat .sep {
      margin-left: -1px;
    }
    .qat .bar {
      margin-left: 4px;
    }
    .doc {
      width: 284px;
      flex: none;
      font-size: 7px;
      color: #ced1d6;
      white-space: nowrap;
    }
    .tools {
      display: flex;
      align-items: center;
      gap: 5px;
      color: #d5d8dd;
    }
    .tri {
      border: 2px solid transparent;
      border-right: 3px solid #e3e5e8;
    }
    .user {
      margin-left: -2px;
      margin-right: -1px;
      white-space: nowrap;
    }
    .win {
      display: flex;
      gap: 6px;
      margin-left: auto;
      margin-right: 3px;
    }

    /* tab bar */
    .tabs {
      height: 13px;
      background: #2b323e;
      display: flex;
      align-items: center;
      padding-left: 1px;
    }
    .file {
      width: 26px;
      height: 12px;
      background: #1a6fb5;
      color: #eaf2fa;
      text-align: center;
      line-height: 12px;
      margin-right: 1px;
    }
    .tab {
      padding: 0 6px;
      height: 13px;
      line-height: 13px;
      font-size: 7px;
      color: #cfd2d7;
      white-space: nowrap;
    }
    .tab.on {
      background: #3b4555;
      color: #e8eaee;
    }
    .tab-extra {
      display: flex;
      align-items: center;
      gap: 2px;
      margin-left: 14px;
    }

    /* ribbon */
    .ribbon {
      height: 58px;
      display: grid;
      grid-template-columns: 35px 214px 109px 365px 197px;
      background: #3b4555;
      border-bottom: 1px solid #2b323e;
    }
    .panel {
      display: flex;
      flex-direction: column;
      border-right: 1px solid #454f60;
    }
    .body {
      height: 46px;
      display: flex;
    }
    .lab {
      height: 12px;
      background: #343c4a;
      text-align: center;
      line-height: 12px;
      color: #bcc0c7;
      position: relative;
    }
    .lab .caret {
      display: inline-block;
      vertical-align: middle;
      margin-left: 2px;
    }
    .launch {
      position: absolute;
      right: 3px;
      top: 4px;
      width: 3px;
      height: 3px;
      border-top: 1px solid #a3a8b1;
      border-right: 1px solid #a3a8b1;
    }
    .p-select .body {
      padding: 2px 0 0 4px;
    }
    .p-graphics .body {
      padding-left: 6px;
    }
    .p-present .body {
      padding-left: 2px;
    }
    .p-create .body {
      padding-left: 3px;
    }
    .p-win .body {
      padding-left: 7px;
    }
    .big {
      display: flex;
      flex-direction: column;
      align-items: center;
      line-height: 10px;
      padding-top: 3px;
      color: #cfd2d7;
      text-align: center;
      white-space: nowrap;
      flex: none;
    }
    .big-ico {
      height: 22px;
      display: flex;
      align-items: center;
      justify-content: center;
    }
    .big.off {
      color: #69717f;
    }
    .modify {
      width: 26px;
      height: 43px;
      background: #354a5c;
      border: 1px solid #3e6579;
      padding-top: 1px;
    }
    .w22 {
      width: 22px;
    }
    .w24 {
      width: 24px;
    }
    .w25 {
      width: 25px;
    }
    .w32 {
      width: 32px;
    }
    .w34 {
      width: 34px;
    }
    .w36 {
      width: 36px;
    }
    .callout {
      margin-left: 7px;
    }
    .side {
      margin: 31px 1px 0;
      align-self: flex-start;
    }
    .side.wide {
      margin: 31px 4px 0 5px;
    }
    .side.narrow {
      margin: 31px 2px 0 -1px;
    }
    .divider {
      width: 1px;
      height: 42px;
      margin: 2px 7px 0 0;
      background: #4c5667;
    }
    .stack {
      padding-top: 2px;
      display: flex;
      flex-direction: column;
      flex: none;
    }
    .stack.two {
      margin-left: 2px;
      padding-top: 6px;
      gap: 3px;
    }
    .w79 {
      width: 79px;
    }
    .w62 {
      width: 62px;
      margin-left: 8px;
    }
    .w72 {
      width: 72px;
    }
    .w63 {
      width: 63px;
    }
    .row {
      height: 15px;
      display: flex;
      align-items: center;
      gap: 3px;
      white-space: nowrap;
      word-spacing: 0.5px;
      color: #cfd2d7;
    }
    .row .caret {
      margin-left: 3px;
    }
    .row.off {
      color: #69717f;
    }
    .sched-btn {
      width: 57px;
      height: 13px;
      margin-top: 1px;
      padding-left: 3px;
      background: #2a303c;
    }
    .sched-btn .caret {
      margin-left: 2px;
    }
    .sheet-row .ico + span + .ico {
      margin-left: 4px;
    }
    .sheet-row .ico:last-child {
      margin-left: 7px;
    }
    .row.end {
      justify-content: flex-start;
      padding-left: 51px;
    }

    .strip {
      height: 17px;
      background: #3f4959;
      border-bottom: 1px solid #333b48;
    }

    /* work area */
    .work {
      height: 370px;
      display: grid;
      grid-template-columns: 165px 592px 163px;
    }

    .dock {
      height: 11px;
      background: #222935;
      display: flex;
      align-items: center;
      justify-content: space-between;
      padding: 0 3px 0 2px;
      color: #c9ccd1;
    }
    .x {
      font-size: 9px;
      color: #e0e2e6;
      line-height: 1;
    }

    /* properties */
    .props {
      display: flex;
      flex-direction: column;
      min-height: 0;
      background: #3b4555;
    }
    .type {
      height: 44.500px;
      display: flex;
      align-items: center;
      padding-right: 6px;
    }
    .type .caret {
      margin-left: auto;
    }
    .type-ico {
      margin: 2px 5px 0 3px;
      width: 37px;
      height: 38px;
      border: 1px solid #414b5b;
      display: flex;
      align-items: center;
      justify-content: center;
    }
    .type-row {
      height: 14px;
      display: flex;
      align-items: center;
      gap: 2px;
      padding-left: 2px;
    }
    .sel {
      width: 116px;
      display: flex;
      align-items: center;
      justify-content: space-between;
      border-bottom: 1px solid #7b8392;
      padding: 0 4px 3px 1px;
      margin-top: 4px;
    }
    .sheet-wrap {
      flex: 1;
      display: flex;
      overflow: hidden;
    }
    .sheet {
      width: 153px;
      flex: none;
    }
    .grp {
      height: 12px;
      background: #2a303c;
      font-weight: 700;
      color: #eef0f2;
      line-height: 12px;
      padding-left: 2px;
      display: flex;
      justify-content: space-between;
      align-items: center;
      padding-right: 3px;
    }
    .pin {
      width: 3px;
      height: 4px;
      background: #c7cad0;
    }
    .prow {
      height: 11.55px;
      display: grid;
      grid-template-columns: 73px 1fr;
      border-bottom: 1px solid #434d5d;
      color: #cfd2d7;
      white-space: nowrap;
    }
    .prow.off {
      color: #737b89;
    }
    .pn {
      padding-left: 6px;
      overflow: hidden;
      font-size: 7px;
      line-height: 10.5px;
      border-right: 1px solid #434d5d;
    }
    .pv {
      padding-left: 1px;
      line-height: 10.5px;
      display: flex;
      align-items: center;
      min-width: 0;
    }
    .val {
      flex: 1;
      padding-left: 1px;
    }
    .boxed {
      margin-right: 8px;
      height: 11px;
      border: 1px solid #8d94a0;
      line-height: 9px;
      padding-left: 0;
    }
    .edit {
      width: 72px;
      height: 10px;
      border: 1px solid #868c97;
      text-align: center;
      line-height: 8px;
    }
    .chk {
      width: 7px;
      height: 7px;
      margin-left: 2px;
      border: 1px solid #9aa0aa;
    }
    .off .chk {
      border-color: #69717f;
    }
    .chk.tick {
      background: #596272;
      position: relative;
    }
    .chk.tick::after {
      content: '✓';
      position: absolute;
      left: 0;
      top: -1px;
      font-size: 6px;
      line-height: 7px;
      color: #a7acb5;
    }
    .vscroll {
      width: 12px;
      flex: none;
      display: flex;
      flex-direction: column;
      align-items: center;
      background: #373f4e;
      position: relative;
      color: #9aa0aa;
      font-size: 6px;
    }
    .vscroll .up {
      height: 10px;
      line-height: 12px;
    }
    .vscroll .down {
      margin-top: auto;
      height: 10px;
      line-height: 8px;
    }
    .thumb {
      width: 5px;
      height: 172px;
      border-radius: 3px;
      background: #66778f;
    }
    .prop-foot {
      height: 14px;
      display: flex;
      align-items: center;
      gap: 2px;
      padding-left: 2px;
      background: #3b4555;
    }
    .pick {
      width: 12px;
      height: 12px;
      display: flex;
      align-items: center;
      justify-content: center;
      background: #333a48;
    }
    .pick.on {
      background: #2a6f9e;
    }
    .apply {
      margin-left: auto;
      margin-right: 4px;
      width: 40px;
      height: 11px;
      border: 1px solid #59616f;
      text-align: center;
      line-height: 9px;
      color: #69717f;
    }

    /* center */
    .center {
      display: flex;
      flex-direction: column;
      min-width: 0;
      border-left: 3px solid #2c3340;
    }
    .doc-tabs {
      height: 14px;
      display: flex;
      align-items: center;
      background: #3f4959;
    }
    .dt {
      height: 14px;
      display: flex;
      align-items: center;
      gap: 5px;
      width: 77px;
      padding-left: 2px;
      color: #aab0ba;
    }
    .dt.cur {
      width: 91px;
      margin-left: 6px;
      background: #222935;
      color: #f1f2f4;
      font-weight: 700;
      padding-left: 3px;
    }
    .dt.cur .x {
      margin-left: -1px;
      font-weight: 400;
    }
    .view-row {
      flex: 1;
      display: flex;
      min-height: 0;
    }
    .canvas {
      width: 576px;
      flex: none;
      background: #212833;
      position: relative;
      overflow: hidden;
    }
    .cubes {
      position: absolute;
      left: 182px;
      top: 51px;
    }
    .viewcube {
      position: absolute;
      left: 474px;
      top: 2px;
    }
    .navbar {
      position: absolute;
      left: 559px;
      top: 81px;
      width: 15px;
      height: 68px;
      background: #65696f;
      border-radius: 1px;
      display: flex;
      flex-direction: column;
      align-items: center;
      gap: 4px;
      padding: 2px 0;
    }
    .nav-dot {
      width: 3px;
      height: 3px;
      background: #b9bbbf;
      border-radius: 50%;
      align-self: flex-end;
      margin-right: 1px;
    }
    .nav-caret {
      width: 5px;
      height: 1px;
      background: #8a8d92;
    }
    .view-scroll {
      width: 7px;
      flex: none;
      background: #2d3441;
      display: flex;
      justify-content: center;
      padding-top: 167px;
    }
    .thumb.mini {
      width: 4px;
      height: 10px;
      background: #75869e;
    }
    .gutter {
      flex: 1;
      background: #3b4555;
    }
    .view-bottom {
      height: 13px;
      display: flex;
      background: #2d3441;
    }
    .vcb {
      width: 252px;
      background: #3b4555;
      display: flex;
      align-items: center;
      padding-left: 5px;
      color: #c9ccd1;
      flex: none;
    }
    .vcb-icons {
      display: flex;
      align-items: center;
      gap: 4.3px;
      margin-left: 8px;
    }
    .less {
      margin-left: 5px;
      font-size: 9px;
    }
    .hscroll {
      flex: 1;
      margin-right: 6px;
      position: relative;
    }
    .hthumb {
      position: absolute;
      left: 153px;
      top: 3px;
      width: 10px;
      height: 5px;
      border-radius: 3px;
      background: #75869e;
    }
    .more {
      position: absolute;
      right: 14px;
      top: 0;
      font-size: 9px;
      color: #9aa0aa;
    }

    /* project browser */
    .browser {
      display: flex;
      flex-direction: column;
      min-height: 0;
      background: #3b4555;
    }
    .br-tools {
      height: 14px;
      background: #222935;
      display: flex;
      align-items: center;
      gap: 5px;
      padding-left: 75px;
    }
    .search {
      margin: 6px 5px 6px;
      height: 13px;
      background: #2a303c;
      display: flex;
      align-items: center;
      gap: 5px;
      padding-left: 5px;
      color: #737b89;
    }
    .tree-wrap {
      flex: 1;
      display: flex;
      min-height: 0;
      overflow: hidden;
    }
    .tree {
      width: 152px;
      flex: none;
      overflow: hidden;
      font-size: 7px;
    }
    .tree-scroll {
      flex: 1;
      background: #333b49;
    }
    .tree-scroll .thumb {
      height: 54px;
    }
    .node {
      height: 12.03px;
      display: flex;
      align-items: center;
      white-space: nowrap;
      color: #d0d3d8;
    }
    .g1 {
      background: linear-gradient(#717a89 50%, transparent 50%) 6px 0 / 1px 2px repeat-y;
    }
    .g2 {
      background:
        linear-gradient(#717a89 50%, transparent 50%) 6px 0 / 1px 2px repeat-y,
        linear-gradient(#717a89 50%, transparent 50%) 15px 0 / 1px 2px repeat-y;
    }
    .g3 {
      background:
        linear-gradient(#717a89 50%, transparent 50%) 6px 0 / 1px 2px repeat-y,
        linear-gradient(#717a89 50%, transparent 50%) 15px 0 / 1px 2px repeat-y,
        linear-gradient(#717a89 50%, transparent 50%) 24px 0 / 1px 2px repeat-y;
    }
    .node.cur {
      background-color: #2f3745;
      color: #fff;
      font-weight: 700;
    }
    .tick {
      width: 5px;
      height: 0;
      border-top: 1px dotted #717a89;
      flex: none;
    }
    .tick.long {
      width: 19px;
    }
    .exp {
      width: 8px;
      flex: none;
      text-align: center;
      font-size: 9px;
      line-height: 10px;
      color: #d8dade;
      margin-right: 4px;
      font-weight: 700;
    }
    .node-ico {
      flex: none;
      margin-right: 3px;
    }
    .g0 .exp {
      margin-right: 3px;
    }

    /* status bar */
    .status {
      height: 14px;
      background: #3b4555;
      display: flex;
      align-items: center;
      white-space: nowrap;
      color: #c9ccd1;
    }
    .hint {
      width: 329px;
      padding-left: 1px;
      flex: none;
    }
    .worksets {
      width: 128px;
      flex: none;
    }
    .stat-mid {
      display: flex;
      align-items: center;
      gap: 3px;
      width: 40px;
      flex: none;
    }
    .dim {
      color: #8e95a1;
    }
    .stat-icons {
      display: flex;
      gap: 5px;
      width: 30px;
      flex: none;
    }
    .model {
      width: 125px;
      flex: none;
      display: flex;
      justify-content: space-between;
      align-items: center;
      color: #747c8a;
      height: 12px;
      border-bottom: 1px solid #606877;
      padding-right: 4px;
    }
    .sel-ico {
      display: flex;
      align-items: center;
      gap: 4.500px;
      margin-left: 133px;
    }

    /* taskbar */
    .taskbar {
      height: 29px;
      background: linear-gradient(90deg, #2a2517, #2a271b 50%, #252421);
      display: flex;
      align-items: center;
      color: #f1f1ee;
      position: relative;
    }
    .weather {
      display: flex;
      align-items: center;
      gap: 4px;
      padding-left: 12px;
      width: 267px;
      flex: none;
      line-height: 10px;
    }
    .sub {
      color: #d9d8d2;
    }
    .middle {
      display: flex;
      align-items: center;
      flex: none;
    }
    .pill {
      width: 131px;
      height: 20px;
      margin: 0 2px 0 7px;
      border-radius: 10px;
      background: #3f3b30;
      display: flex;
      align-items: center;
      padding: 0 1px 0 7px;
      gap: 6px;
      color: #c9c8c1;
      font-size: 8px;
    }
    .pill .ico:last-child {
      margin-left: auto;
    }
    .app {
      width: 26.500px;
      height: 24px;
      display: flex;
      align-items: center;
      justify-content: center;
      position: relative;
      border-radius: 3px;
      flex: none;
    }
    .app.teams {
      background: #6a3b40;
    }
    .app.revit {
      background: #34322c;
    }
    .app.run::after {
      content: '';
      position: absolute;
      left: 11px;
      bottom: 0;
      width: 4px;
      height: 1.5px;
      border-radius: 1px;
      background: #a6a59f;
    }
    .app.revit::after {
      content: '';
      position: absolute;
      left: 7px;
      bottom: 0;
      width: 12px;
      height: 2px;
      border-radius: 1px;
      background: #4cc2ff;
    }
    .badge {
      position: absolute;
      right: 1px;
      top: 0;
      min-width: 9px;
      height: 9px;
      padding: 0 1px;
      border-radius: 5px;
      font-size: 6px;
      line-height: 9px;
      text-align: center;
      background: #dc4a52;
      color: #fff;
      font-weight: 400;
    }
    .badge.wa {
      background: #4ba7e6;
      color: #16222c;
    }
    .tray {
      display: flex;
      align-items: center;
      margin-left: auto;
      padding-right: 11px;
      gap: 3px;
    }
    .chev {
      font-size: 9px;
      margin-right: 3px;
    }
    .eng {
      margin: 0 5px 0 11px;
    }
    .clock {
      text-align: right;
      margin-left: 6px;
      line-height: 10px;
      font-size: 7.500px;
    }

    /* schedules dropdown + tooltip */
    .menu {
      position: absolute;
      left: 587px;
      top: 45px;
      width: 116px;
      height: 145px;
      background: #3c4759;
      padding-top: 1px;
    }
    .mi {
      height: 24px;
      display: flex;
      align-items: center;
      gap: 4px;
      padding-left: 2px;
      color: #b2b7bf;
      white-space: nowrap;
    }
    .mi.hot {
      background: #2c3340;
      color: #c7cad0;
    }
    .tip {
      position: absolute;
      left: 621px;
      top: 78px;
      width: 207px;
      height: 51px;
      background: #ebebea;
      padding: 5px 5px 0;
      box-shadow: 0 1px 3px rgba(0, 0, 0, 0.4);
      color: #3a3a3a;
    }
    .tip-t {
      font-weight: 700;
      height: 12px;
    }
    .tip-d {
      color: #7a7a7a;
      white-space: nowrap;
      border-bottom: 1px solid #c4c4c4;
      height: 15px;
      padding-top: 2px;
    }
    .tip-h {
      font-weight: 700;
      padding-top: 5px;
    }
  `
}
